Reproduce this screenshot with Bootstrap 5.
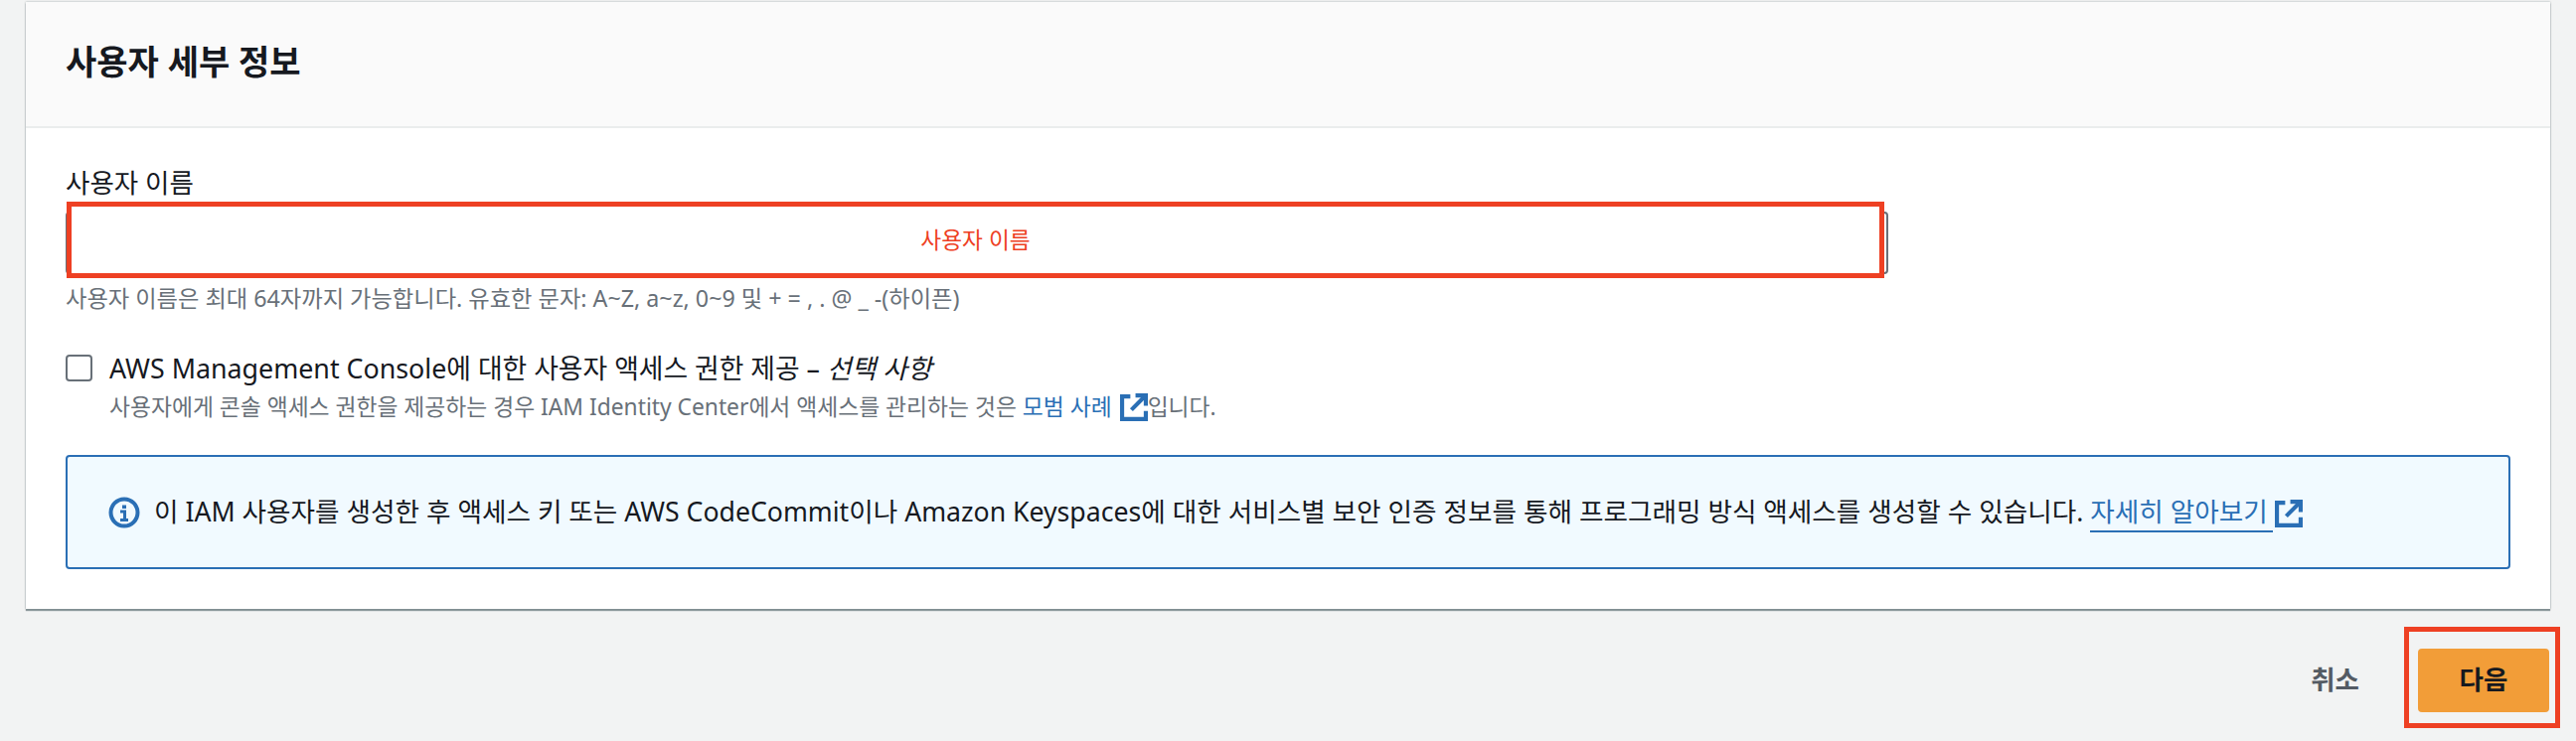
<!DOCTYPE html>
<html lang="ko">
<head>
<meta charset="utf-8">
<title>사용자 세부 정보</title>
<link href="https://cdn.jsdelivr.net/npm/bootstrap@5.3.0/dist/css/bootstrap.min.css" rel="stylesheet">
<style>
html, body { height: 746px; overflow: hidden; }
body { background: #f2f3f3; color: #16191f; font-family: "Noto Sans", "Noto Sans CJK KR", sans-serif; font-size: 26.65px; line-height: 33px; }
.page-wrap { padding: 2px 26px 0; }
.detail-card { border: 0; border-radius: 0; background: #fff; box-shadow: 0 2px 1px 0 rgba(0,28,36,.4), 0 0 2px 0 rgba(0,28,36,.35); }
.detail-card .card-header { height: 127px; padding: 0 40px; background: #fafafa; border-bottom: 2px solid #eaeded; border-radius: 0; display: flex; align-items: center; }
.detail-title { font-size: 34px; font-weight: 700; margin: 0 0 5px; line-height: 40px; }
.detail-card .card-body { padding: 39px 40px 40px; }
.field-label { margin: 0 0 14px; line-height: 33px; display: block; height: 31px; font-size: 26.5px; }
.field-box { width: 1834px; position: relative; }
.field-input { height: 63px; border: 2px solid #687078; border-radius: 4px; }
.anno-box { position: absolute; border: 5px solid #ee4023; color: #ee4023; display: flex; align-items: center; justify-content: center; font-size: 22.7px; }
.anno-input { left: 1px; right: 4px; top: -10px; bottom: -4px; background: #fff; }
.anno-btn { left: -14px; right: -11px; top: -22px; bottom: -16px; }
.help-text { font-size: 23.25px; line-height: 28px; color: #687078; margin-top: 10px; }
.check-row { display: flex; gap: 17px; margin-top: 42px; }
.check-row .form-check-input { width: 27px; height: 27px; margin: 1px 0 0; border: 2px solid #687078; border-radius: 4px; flex: none; }
.check-label { line-height: 30px; font-size: 26.8px; }
.check-sub { font-size: 22.8px; line-height: 28px; color: #687078; margin-top: 10px; }
.aws-link { color: #2a6fb5; text-decoration: none; }
.ext-ico { width: 28px; height: 28px; vertical-align: -6px; margin-left: 8px; }
.aws-link .ext-ico { margin-left: 8px; }
.info-note { display: flex; align-items: center; gap: 14px; height: 115px; margin: 34px 0 0; padding: 0 41px; background: #f1faff; border: 2px solid #2a6fb5; border-radius: 4px; color: #16191f; }
.info-ico { width: 32px; height: 32px; flex: none; }
.info-link { color: #2a6fb5; text-decoration: none; border-bottom: 2px solid #2a6fb5; padding: 0 5px 1px 0; }
.info-note .ext-ico { margin-left: 2px; }
.action-row { display: flex; justify-content: flex-end; align-items: center; gap: 59px; margin: 40px 1px 0 0; }
.cancel-btn { color: #545b64; font-weight: 700; font-size: 26.5px; padding: 0; border: 0; }
.next-wrap { position: relative; }
.next-btn { width: 132px; height: 64px; background: #f29d38; border: 0; border-radius: 4px; color: #16191f; font-weight: 700; font-size: 26.5px; padding: 0; }
</style>
</head>
<body>
<div class="page-wrap">
  <div class="card detail-card">
    <div class="card-header">
      <h2 class="detail-title">사용자 세부 정보</h2>
    </div>
    <div class="card-body">
      <label class="field-label" for="uname">사용자 이름</label>
      <div class="field-box">
        <input class="form-control field-input" id="uname" type="text">
        <div class="anno-box anno-input">사용자 이름</div>
      </div>
      <div class="help-text">사용자 이름은 최대 64자까지 가능합니다. 유효한 문자: A~Z, a~z, 0~9 및 + = , . @ _ -(하이픈)</div>
      <div class="check-row">
        <input class="form-check-input" type="checkbox" id="console">
        <div>
          <label class="check-label d-block" for="console">AWS Management Console에 대한 사용자 액세스 권한 제공 – <em>선택 사항</em></label>
          <div class="check-sub">사용자에게 콘솔 액세스 권한을 제공하는 경우 IAM Identity Center에서 액세스를 관리하는 것은 <a class="aws-link" href="#">모범 사례<svg class="ext-ico" viewBox="0 0 27 27" fill="none" stroke="#2a6fb5" stroke-width="4"><path d="M10 3H2v22h23v-8"/><path d="M15 2h10v10"/><path d="M25 2 11 16"/></svg></a>입니다.</div>
        </div>
      </div>
      <div class="alert info-note" role="alert">
        <svg class="info-ico" viewBox="0 0 32 32" fill="none" stroke="#2a6fb5"><circle cx="16" cy="16" r="13.5" stroke-width="4"/><path d="M16 8.500v3.500" stroke-width="4"/><path d="M12 15h4.500v8M12 23.500h8" stroke-width="3"/></svg>
        <div>이 IAM 사용자를 생성한 후 액세스 키 또는 AWS CodeCommit이나 Amazon Keyspaces에 대한 서비스별 보안 인증 정보를 통해 프로그래밍 방식 액세스를 생성할 수 있습니다. <a class="info-link" href="#">자세히 알아보기</a><svg class="ext-ico" viewBox="0 0 27 27" fill="none" stroke="#2a6fb5" stroke-width="4"><path d="M10 3H2v22h23v-8"/><path d="M15 2h10v10"/><path d="M25 2 11 16"/></svg></div>
      </div>
    </div>
  </div>
  <div class="action-row">
    <button class="btn cancel-btn" type="button">취소</button>
    <div class="next-wrap">
      <button class="btn next-btn" type="button">다음</button>
      <div class="anno-box anno-btn"></div>
    </div>
  </div>
</div>
</body>
</html>
